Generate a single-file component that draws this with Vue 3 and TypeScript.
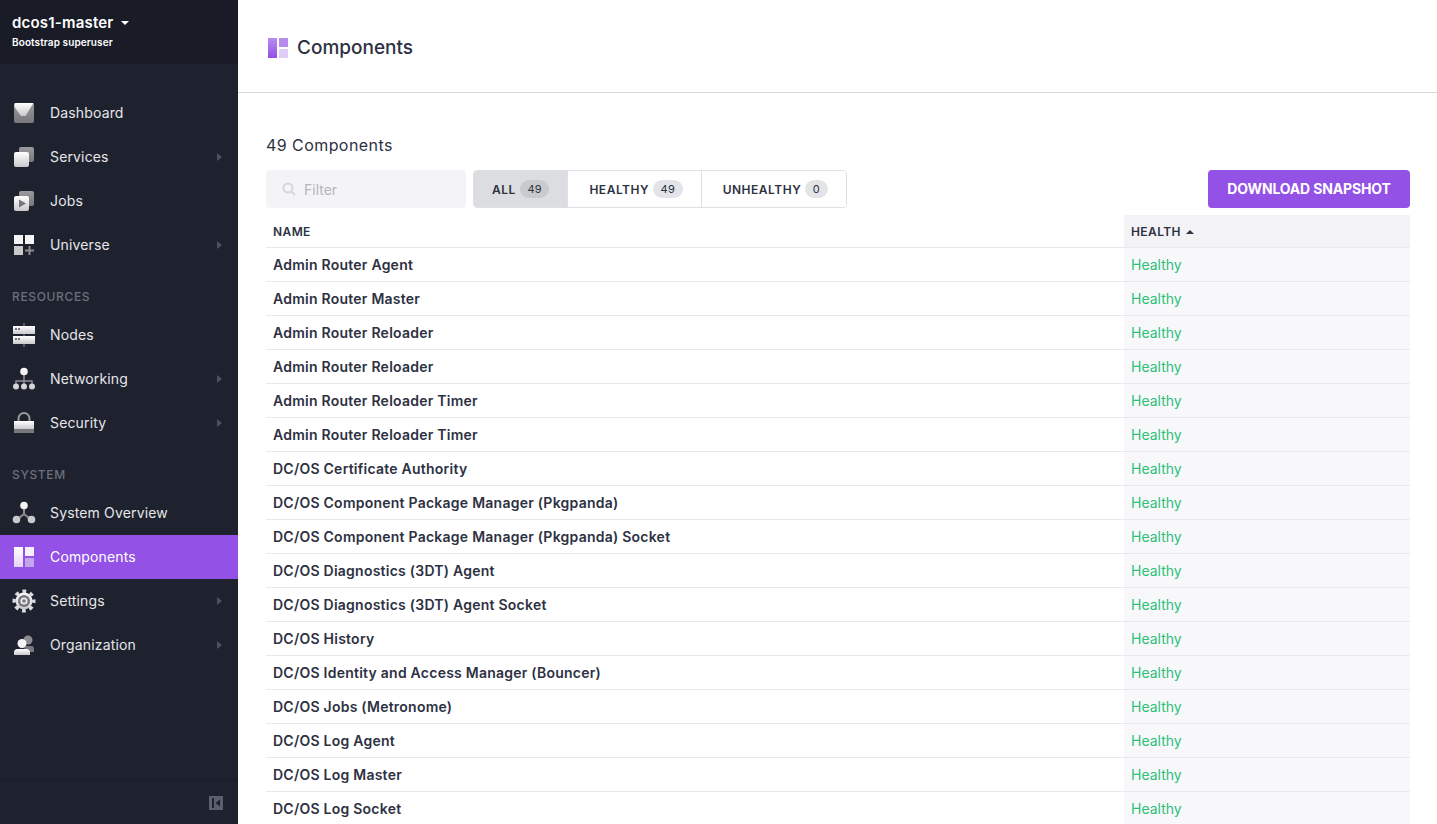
<script setup lang="ts">
interface NavItem {
  label: string
  icon: string
  arrow?: boolean
  active?: boolean
}

const primaryNav: NavItem[] = [
  { label: 'Dashboard', icon: 'dashboard' },
  { label: 'Services', icon: 'services', arrow: true },
  { label: 'Jobs', icon: 'jobs' },
  { label: 'Universe', icon: 'universe', arrow: true },
]
const resourceNav: NavItem[] = [
  { label: 'Nodes', icon: 'nodes' },
  { label: 'Networking', icon: 'networking', arrow: true },
  { label: 'Security', icon: 'security', arrow: true },
]
const systemNav: NavItem[] = [
  { label: 'System Overview', icon: 'overview' },
  { label: 'Components', icon: 'components', active: true },
  { label: 'Settings', icon: 'settings', arrow: true },
  { label: 'Organization', icon: 'organization', arrow: true },
]
const navGroups = [
  { title: '', items: primaryNav },
  { title: 'RESOURCES', items: resourceNav },
  { title: 'SYSTEM', items: systemNav },
]

const components = [
  'Admin Router Agent',
  'Admin Router Master',
  'Admin Router Reloader',
  'Admin Router Reloader',
  'Admin Router Reloader Timer',
  'Admin Router Reloader Timer',
  'DC/OS Certificate Authority',
  'DC/OS Component Package Manager (Pkgpanda)',
  'DC/OS Component Package Manager (Pkgpanda) Socket',
  'DC/OS Diagnostics (3DT) Agent',
  'DC/OS Diagnostics (3DT) Agent Socket',
  'DC/OS History',
  'DC/OS Identity and Access Manager (Bouncer)',
  'DC/OS Jobs (Metronome)',
  'DC/OS Log Agent',
  'DC/OS Log Master',
  'DC/OS Log Socket',
]

const tabs = [
  { label: 'ALL', count: 49, active: true },
  { label: 'HEALTHY', count: 49 },
  { label: 'UNHEALTHY', count: 0 },
]
</script>

<template>
  <div class="app">
    <aside class="sidebar">
      <div class="cluster">
        <div class="cluster-name">
          <span>dcos1-master</span>
          <i class="caret"></i>
        </div>
        <div class="cluster-user">Bootstrap superuser</div>
      </div>

      <nav class="nav">
        <div v-for="group in navGroups" :key="group.title" class="nav-group">
          <div v-if="group.title" class="nav-title">{{ group.title }}</div>
          <a
            v-for="item in group.items"
            :key="item.label"
            class="nav-item"
            :class="{ active: item.active }"
          >
            <svg class="nav-icon" width="24" height="24" viewBox="0 0 24 24">
              <defs>
                <linearGradient id="g-light" x1="0" y1="0" x2="0" y2="1">
                  <stop offset="0" stop-color="#ffffff" />
                  <stop offset="1" stop-color="#c9c9cc" />
                </linearGradient>
                <linearGradient id="g-grey" x1="0" y1="0" x2="0" y2="1">
                  <stop offset="0" stop-color="#9a9a9e" />
                  <stop offset="1" stop-color="#77777c" />
                </linearGradient>
                <linearGradient id="g-fade" x1="0" y1="0" x2="0" y2="1">
                  <stop offset="0" stop-color="#ffffff" />
                  <stop offset="1" stop-color="#e3d2f8" />
                </linearGradient>
              </defs>
              <template v-if="item.icon === 'dashboard'">
                <rect x="2" y="2" width="20" height="20" rx="2" fill="url(#g-grey)" />
                <path d="M2.500 2.500 4 2h17.500L13.500 15H9L2.500 6z" fill="url(#g-light)" />
              </template>
              <template v-else-if="item.icon === 'services'">
                <rect x="7" y="2" width="15" height="15" rx="2" fill="url(#g-grey)" />
                <rect x="2" y="7" width="15" height="15" rx="2" fill="url(#g-light)" />
              </template>
              <template v-else-if="item.icon === 'jobs'">
                <rect x="7" y="2" width="15" height="15" rx="2" fill="url(#g-grey)" />
                <rect x="2" y="7" width="15" height="15" rx="2" fill="url(#g-light)" />
                <path d="M7 10.500 14 14.500 7 18.500z" fill="#77777c" />
              </template>
              <template v-else-if="item.icon === 'universe'">
                <rect x="2" y="2" width="9" height="9" fill="#f4f4f5" />
                <rect x="13" y="2" width="9" height="9" fill="#f4f4f5" />
                <rect x="2" y="13" width="9" height="9" fill="#c9c9cc" />
                <path d="M16.500 13h2v3.500H22v2h-3.500V22h-2v-3.500H13v-2h3.500z" fill="#8d8d91" />
              </template>
              <template v-else-if="item.icon === 'nodes'">
                <rect x="11.500" y="0" width="1" height="24" fill="#8d8d91" />
                <rect x="1" y="3" width="22" height="8" fill="url(#g-light)" />
                <rect x="1" y="13" width="22" height="8" fill="url(#g-light)" />
                <rect x="3" y="5" width="2" height="2" fill="#77777c" />
                <rect x="6" y="5" width="2" height="2" fill="#77777c" />
                <rect x="3" y="15" width="2" height="2" fill="#77777c" />
                <rect x="6" y="15" width="2" height="2" fill="#77777c" />
              </template>
              <template v-else-if="item.icon === 'networking'">
                <path d="M12 6v13M4 19v-5h16v5" fill="none" stroke="#8d8d91" stroke-width="1.500" />
                <circle cx="12" cy="4.500" r="3.800" fill="#f4f4f5" />
                <circle cx="4" cy="19.500" r="3" fill="#d3d3d6" />
                <circle cx="12" cy="19.500" r="3" fill="#d3d3d6" />
                <circle cx="20" cy="19.500" r="3" fill="#d3d3d6" />
              </template>
              <template v-else-if="item.icon === 'security'">
                <path d="M6.500 10V7.500a5.500 5.500 0 0 1 11 0V10" fill="none" stroke="#9a9a9e" stroke-width="2" />
                <path d="M2 10h20v8H2z" fill="url(#g-light)" />
                <path d="M2 18h20v4H2z" fill="#77777c" />
              </template>
              <template v-else-if="item.icon === 'overview'">
                <path d="M12 5v8L4.500 19M12 13l7.500 6" fill="none" stroke="#8d8d91" stroke-width="2" />
                <circle cx="12" cy="4.500" r="3.800" fill="#f4f4f5" />
                <circle cx="4.500" cy="18.500" r="3.800" fill="#c9c9cc" />
                <circle cx="19.500" cy="18.500" r="3.800" fill="#c9c9cc" />
              </template>
              <template v-else-if="item.icon === 'components'">
                <rect x="2" y="2" width="9" height="20" fill="url(#g-fade)" />
                <rect x="13" y="2" width="9" height="9" fill="#f6f0fd" />
                <rect x="13" y="13" width="9" height="9" fill="#c4a3ef" />
              </template>
              <template v-else-if="item.icon === 'settings'">
                <circle cx="12" cy="12" r="8.500" fill="url(#g-light)" />
                <circle cx="12" cy="12" r="9.800" fill="none" stroke="#dcdcde" stroke-width="3.400" stroke-dasharray="3.850 3.850" stroke-dashoffset="1.900" />
                <circle cx="12" cy="12" r="6" fill="#77777c" />
                <circle cx="12" cy="12" r="3.600" fill="#ececee" />
                <circle cx="12" cy="12" r="1.800" fill="#77777c" />
              </template>
              <template v-else-if="item.icon === 'organization'">
                <circle cx="16" cy="7" r="4.500" fill="#8d8d91" />
                <path d="M12 13h7.500a2.500 2.500 0 0 1 2.500 2.500V19h-9z" fill="#77777c" />
                <circle cx="10" cy="10.500" r="4.500" fill="#f4f4f5" />
                <path d="M2 22v-2.500A3.500 3.500 0 0 1 5.500 16h9a3.500 3.500 0 0 1 3.500 3.500V22z" fill="url(#g-light)" />
              </template>
            </svg>
            <span class="nav-label">{{ item.label }}</span>
            <i v-if="item.arrow" class="nav-arrow"></i>
          </a>
        </div>
      </nav>

      <div class="sidebar-footer">
        <svg width="14" height="14" viewBox="0 0 14 14">
          <path d="M0 0h14v14H0z M3 2v10h2V2z M11 3.500 6.500 7l4.500 3.500z" fill="#5c5f6e" fill-rule="evenodd" />
        </svg>
      </div>
    </aside>

    <main class="main">
      <header class="page-header">
        <svg width="20" height="20" viewBox="0 0 20 20">
          <defs>
            <linearGradient id="g-head" x1="0" y1="0" x2="0" y2="1">
              <stop offset="0" stop-color="#b88cef" />
              <stop offset="1" stop-color="#9351e5" />
            </linearGradient>
          </defs>
          <rect x="0" y="0" width="9" height="20" fill="url(#g-head)" />
          <rect x="11" y="0" width="9" height="9" fill="#b88cef" />
          <rect x="11" y="11" width="9" height="9" fill="#e0cdf8" />
        </svg>
        <h1>Components</h1>
      </header>

      <section class="content">
        <h2>49 Components</h2>

        <div class="toolbar">
          <div class="filter">
            <svg width="14" height="14" viewBox="0 0 14 14">
              <circle cx="6" cy="6" r="4.500" fill="none" stroke="#d6d7da" stroke-width="2" />
              <path d="m9.500 9.500 3.500 3.500" stroke="#d6d7da" stroke-width="2" />
            </svg>
            <span>Filter</span>
          </div>
          <div class="tabs">
            <button v-for="tab in tabs" :key="tab.label" class="tab" :class="{ active: tab.active }">
              {{ tab.label }}<span class="badge">{{ tab.count }}</span>
            </button>
          </div>
          <button class="download">DOWNLOAD SNAPSHOT</button>
        </div>

        <table class="table">
          <thead>
            <tr>
              <th>NAME</th>
              <th class="health">HEALTH<i class="sort"></i></th>
            </tr>
          </thead>
          <tbody>
            <tr v-for="(name, i) in components" :key="i">
              <td class="name">{{ name }}</td>
              <td class="health status">Healthy</td>
            </tr>
          </tbody>
        </table>
      </section>
    </main>
  </div>
</template>

<style>
html,
body {
  margin: 0;
  height: 824px;
  overflow: hidden;
  background: #fff;
}
</style>

<style scoped>
.app {
  display: flex;
  height: 824px;
  overflow: hidden;
  font-family: Inter, 'Liberation Sans', sans-serif;
  color: #2d3142;
}

.sidebar {
  display: flex;
  flex-direction: column;
  flex: 0 0 238px;
  background: #1e222f;
}

.cluster {
  box-sizing: border-box;
  height: 64px;
  padding: 14px 12px 0;
  background: #191c27;
  color: #fff;
}

.cluster-name {
  display: flex;
  align-items: center;
  gap: 7px;
  font-size: 15px;
  font-weight: 600;
  line-height: 18px;
  letter-spacing: 0.2px;
}

.caret {
  width: 0;
  height: 0;
  border: 4px solid transparent;
  border-top: 4px solid #fff;
  border-bottom: 0;
}

.cluster-user {
  margin-top: 3px;
  font-size: 10px;
  font-weight: 600;
  line-height: 14px;
  letter-spacing: 0.1px;
}

.nav {
  flex: 1;
  padding-top: 27px;
}

.nav-title {
  margin-top: 19px;
  padding: 0 12px;
  font-size: 12px;
  font-weight: 500;
  line-height: 22px;
  letter-spacing: 0.65px;
  color: #6d6f7b;
}

.nav-title + .nav-item {
  margin-top: 5px;
}

.nav-item {
  display: flex;
  align-items: center;
  height: 44px;
  padding: 0 16px 0 12px;
  font-size: 14px;
  font-weight: 400;
  color: #e6e6e9;
}

.nav-item.active {
  background: #9351e5;
  color: #fff;
}

.nav-icon {
  flex: none;
}

.nav-label {
  flex: 1;
  margin: 0 0 2px 14px;
  letter-spacing: 0.15px;
}

.nav-arrow {
  width: 0;
  height: 0;
  border: 4px solid transparent;
  border-left: 5px solid #4f525e;
  border-right: 0;
}

.sidebar-footer {
  display: flex;
  justify-content: flex-end;
  box-sizing: border-box;
  height: 44px;
  padding: 15px 15px 0 0;
  border-top: 1px solid #191c27;
}

.main {
  flex: 1;
  min-width: 0;
}

.page-header {
  display: flex;
  align-items: center;
  gap: 9px;
  box-sizing: border-box;
  height: 93px;
  padding: 0 0 0 30px;
  border-bottom: 1px solid #d8d8da;
}

.page-header h1 {
  margin: 2px 0 0;
  font-size: 19px;
  font-weight: 500;
  color: #2d3142;
}

.page-header svg {
  margin-top: 3px;
}

.content {
  padding: 42px 27px 0 28px;
}

.content h2 {
  margin: 0;
  font-size: 16px;
  font-weight: 400;
  line-height: 20px;
  letter-spacing: 0.43px;
}

.toolbar {
  display: flex;
  align-items: stretch;
  height: 38px;
  margin-top: 15px;
}

.filter {
  display: flex;
  align-items: center;
  gap: 8px;
  box-sizing: border-box;
  width: 200px;
  padding-left: 16px;
  border-radius: 4px;
  background: #f4f4f6;
  color: #b4b5bb;
  font-size: 14px;
}

.tabs {
  display: flex;
  box-sizing: border-box;
  margin-left: 7px;
  border: 1px solid #dfe0e3;
  border-radius: 4px;
  overflow: hidden;
}

.tab {
  display: flex;
  align-items: center;
  padding: 0 18px 0 21px;
  border: 0;
  border-left: 1px solid #dfe0e3;
  background: #fff;
  font: 600 12px Inter, 'Liberation Sans', sans-serif;
  letter-spacing: 0.52px;
  color: #2d3142;
}

.tab:first-child {
  border-left: 0;
  padding: 0 18px;
}

.tab.active {
  background: #dcdde0;
}

.badge {
  margin-left: 4px;
  padding: 0 7.5px;
  border-radius: 9px;
  background: #e3e4e7;
  font-size: 11px;
  font-weight: 400;
  line-height: 18px;
  letter-spacing: 0.3px;
}

.tab.active .badge {
  background: #c9cacd;
}

.download {
  margin-left: auto;
  width: 202px;
  padding: 0 0 1px;
  border: 0;
  border-radius: 4px;
  background: #9351e5;
  color: #fff;
  font: 700 14px Inter, 'Liberation Sans', sans-serif;
  letter-spacing: -0.15px;
}

.table {
  width: 100%;
  margin-top: 7px;
  border-collapse: collapse;
  table-layout: fixed;
}

.table th,
.table td {
  box-sizing: border-box;
  padding: 0 7px;
  border-bottom: 1px solid #e9e9eb;
  text-align: left;
}

.table th {
  height: 32px;
  padding-top: 2px;
  font-size: 12px;
  font-weight: 600;
  letter-spacing: 0.4px;
}

.table td {
  height: 34px;
  font-size: 14px;
}

.table .health {
  width: 286px;
  background: #f8f8fa;
}

.table th.health {
  background: #f3f3f5;
}

.name {
  font-weight: 600;
  letter-spacing: 0.24px;
}

.status {
  color: #2cc07a;
}

.sort {
  display: inline-block;
  width: 0;
  height: 0;
  margin-left: 5px;
  vertical-align: 2px;
  border: 4px solid transparent;
  border-bottom: 4px solid #2d3142;
  border-top: 0;
}
</style>
